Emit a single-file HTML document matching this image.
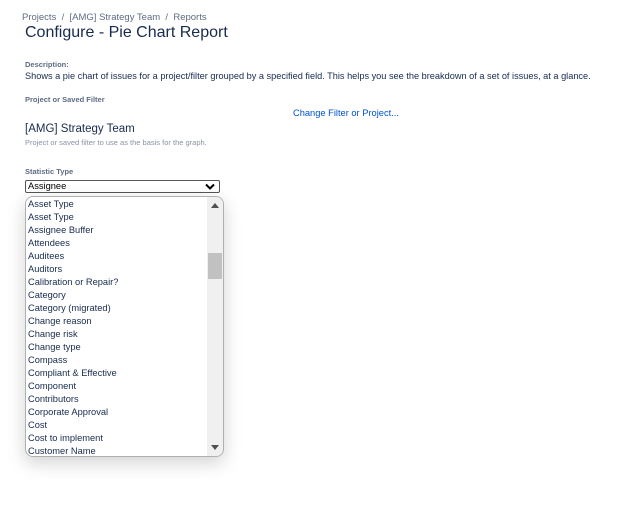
<!DOCTYPE html>
<html><head><style>
body{margin:0;width:620px;height:506px;background:#fff;font-family:"Liberation Sans",sans-serif;color:#172b4d;position:relative;overflow:hidden}
.a{position:absolute;white-space:nowrap}
.lbl{font-size:7.5px;color:#5e6c84;font-weight:bold}
.list{position:absolute;left:25px;top:196px;width:197px;height:259px;border:1px solid #b0b0b0;border-radius:8px;background:#fff;box-shadow:0 6px 18px rgba(0,0,0,.18);overflow:hidden}
.list div.i{position:absolute;left:2px;font-size:9.3px;color:#172b4d}
.sb{position:absolute;left:181px;top:0;width:16px;height:259px;background:#f0f0f0}
</style></head><body>
<div class="a" style="left:22px;top:12px;font-size:9.5px;color:#5e6c84">Projects &nbsp;/&nbsp; [AMG] Strategy Team &nbsp;/&nbsp; Reports</div>
<div class="a" style="left:25px;top:24px;font-size:16px;color:#172b4d">Configure - Pie Chart Report</div>
<div class="a lbl" style="left:25px;top:60px">Description:</div>
<div class="a" style="left:25px;top:71px;font-size:9.2px">Shows a pie chart of issues for a project/filter grouped by a specified field. This helps you see the breakdown of a set of issues, at a glance.</div>
<div class="a lbl" style="left:25px;top:95px">Project or Saved Filter</div>
<div class="a" style="left:293px;top:108px;font-size:9.3px;color:#0052cc">Change Filter or Project...</div>
<div class="a" style="left:25px;top:123px;font-size:11.5px">[AMG] Strategy Team</div>
<div class="a" style="left:25px;top:138px;font-size:7.5px;color:#8993a4">Project or saved filter to use as the basis for the graph.</div>
<div class="a lbl" style="left:25px;top:167px">Statistic Type</div>
<div class="a" style="left:25px;top:180px;width:191px;height:11px;border:1px solid #555;border-radius:2px;font-size:9.3px;line-height:11px;padding-left:2px;color:#000">Assignee<svg style="position:absolute;right:4px;top:2px" width="10" height="7" viewBox="0 0 10 7"><path d="M1 1.5L5 5.5L9 1.5" stroke="#000" stroke-width="2" fill="none"/></svg></div>
<div class="list">
<div class="sb"><svg style="position:absolute;left:4px;top:6px" width="8" height="5"><path d="M0 5L4 0L8 5Z" fill="#505050"/></svg><div style="position:absolute;left:1px;top:56px;width:14px;height:26px;background:#c1c1c1"></div><svg style="position:absolute;left:4px;top:248px" width="8" height="5"><path d="M0 0L8 0L4 5Z" fill="#505050"/></svg></div>
<div class="i" style="top:2px">Asset Type</div>
<div class="i" style="top:15px">Asset Type</div>
<div class="i" style="top:28px">Assignee Buffer</div>
<div class="i" style="top:41px">Attendees</div>
<div class="i" style="top:54px">Auditees</div>
<div class="i" style="top:67px">Auditors</div>
<div class="i" style="top:80px">Calibration or Repair?</div>
<div class="i" style="top:93px">Category</div>
<div class="i" style="top:106px">Category (migrated)</div>
<div class="i" style="top:119px">Change reason</div>
<div class="i" style="top:132px">Change risk</div>
<div class="i" style="top:145px">Change type</div>
<div class="i" style="top:158px">Compass</div>
<div class="i" style="top:171px">Compliant &amp; Effective</div>
<div class="i" style="top:184px">Component</div>
<div class="i" style="top:197px">Contributors</div>
<div class="i" style="top:210px">Corporate Approval</div>
<div class="i" style="top:223px">Cost</div>
<div class="i" style="top:236px">Cost to implement</div>
<div class="i" style="top:249px">Customer Name</div>
</div>
</body></html>
